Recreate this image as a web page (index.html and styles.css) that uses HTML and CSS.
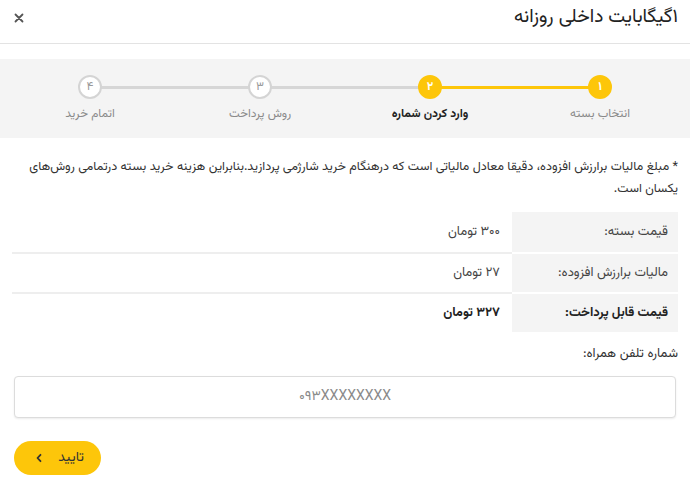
FILE: index.html
```html
<!DOCTYPE html>
<html lang="fa" dir="rtl">
<head>
<meta charset="utf-8">
<title>خرید بسته</title>
<link rel="stylesheet" href="styles.css">
</head>
<body>
<div class="modal">
  <header class="modal-head">
    <h1 class="modal-title">۱گیگابایت داخلی روزانه</h1>
    <button class="close" type="button" aria-label="بستن">
      <svg width="10" height="10" viewBox="0 0 10 10"><path d="M1.5 1.5 L8.5 8.5 M8.5 1.5 L1.5 8.5" stroke="#555" stroke-width="1.8" stroke-linecap="round"/></svg>
    </button>
  </header>

  <ol class="steps">
    <li class="step done"><span class="dot">۱</span><span class="step-label">انتخاب بسته</span></li>
    <li class="step active"><span class="dot">۲</span><span class="step-label">وارد کردن شماره</span></li>
    <li class="step"><span class="dot">۳</span><span class="step-label">روش پرداخت</span></li>
    <li class="step"><span class="dot">۴</span><span class="step-label">اتمام خرید</span></li>
  </ol>

  <p class="note">* مبلغ مالیات برارزش افزوده، دقیقا معادل مالیاتی است که درهنگام خرید شارژمی پردازید.بنابراین هزینه خرید بسته درتمامی روش‌های یکسان است.</p>

  <div class="price-table">
    <div class="row">
      <div class="cell label">قیمت بسته:</div>
      <div class="cell value">۳۰۰ تومان</div>
    </div>
    <div class="row">
      <div class="cell label">مالیات برارزش افزوده:</div>
      <div class="cell value">۲۷ تومان</div>
    </div>
    <div class="row total">
      <div class="cell label">قیمت قابل پرداخت:</div>
      <div class="cell value">۳۲۷ تومان</div>
    </div>
  </div>

  <label class="field-label" for="phone">شماره تلفن همراه:</label>
  <input class="field" id="phone" type="text" placeholder="۰۹۳XXXXXXXX">

  <div class="actions">
    <button class="submit" type="button">
      <span>تایید</span>
      <svg width="8" height="10" viewBox="0 0 8 10"><path d="M5.5 1.8 L2.5 5 L5.5 8.2" fill="none" stroke="#333" stroke-width="1.8" stroke-linecap="round" stroke-linejoin="round"/></svg>
    </button>
  </div>
</div>
</body>
</html>
```

FILE: styles.css
```css
* { box-sizing: border-box; }

html, body {
  margin: 0;
  padding: 0;
  background: #fff;
}

body {
  font-family: "Vazirmatn", "Noto Sans Arabic", "DejaVu Sans", sans-serif;
  color: #333;
  direction: rtl;
  width: 690px;
}

.modal {
  display: flex;
  flex-direction: column;
}

.modal-head {
  height: 44px;
  border-bottom: 1px solid #e3e3e3;
  display: flex;
  align-items: center;
  justify-content: space-between;
  padding: 0 12px 8px 12px;
}

.modal-title {
  margin: 0;
  font-size: 19px;
  font-weight: 400;
  color: #222;
}

.close {
  border: 0;
  background: none;
  padding: 0;
  width: 14px;
  height: 14px;
  display: flex;
  align-items: center;
  justify-content: center;
  cursor: pointer;
}

.steps {
  list-style: none;
  margin: 15px 0 0 0;
  padding: 16px 5px 0 5px;
  height: 79px;
  background: #f4f4f4;
  display: grid;
  grid-template-columns: repeat(4, 1fr);
}

.step {
  position: relative;
  display: flex;
  flex-direction: column;
  align-items: center;
}

.step + .step::before {
  content: "";
  position: absolute;
  top: 11px;
  left: 50%;
  width: 100%;
  height: 3px;
  background: #d6d6d6;
}

.step.active::before {
  background: #fdc60a;
}

.dot {
  position: relative;
  z-index: 1;
  width: 24px;
  height: 24px;
  border-radius: 50%;
  background: #fff;
  border: 2px solid #d4d4d4;
  color: #999;
  font-size: 12px;
  display: flex;
  align-items: center;
  justify-content: center;
  line-height: 1;
}

.step.done .dot,
.step.active .dot {
  background: #fdc60a;
  border-color: #fdc60a;
  color: #fff;
  font-weight: 700;
}

.step-label {
  margin-top: 7px;
  font-size: 12px;
  color: #8a8a8a;
  line-height: 16px;
}

.step.active .step-label {
  color: #222;
  font-weight: 700;
}

.note {
  margin: 18px 12px 0 12px;
  font-size: 12.6px;
  line-height: 22px;
  color: #333;
}

.price-table {
  margin: 12px 12px 0 12px;
  display: flex;
  flex-direction: column;
}

.row {
  display: grid;
  grid-template-columns: 166px 1fr;
}

.row + .row .cell.value {
  border-top: 2px solid #eeeeee;
}

.row + .row .cell.label {
  border-top: 2px solid #fff;
}

.cell {
  height: 40px;
  display: flex;
  align-items: center;
  font-size: 13px;
}

.cell.label {
  background: #f4f4f4;
  padding-right: 10px;
  color: #444;
}

.cell.value {
  padding-right: 12px;
  color: #444;
}

.row.total .cell {
  font-weight: 700;
  color: #222;
}

.field-label {
  margin: 12px 12px 0 12px;
  font-size: 13px;
  color: #333;
  line-height: 20px;
}

.field {
  margin: 12px 14px 0 14px;
  height: 42px;
  border: 1px solid #dcdcdc;
  border-radius: 4px;
  box-shadow: 0 1px 2px rgba(0,0,0,0.08);
  font-family: inherit;
  font-size: 14px;
  text-align: center;
  color: #333;
  direction: ltr;
  outline: none;
}

.field::placeholder {
  color: #8a8a8a;
}

.actions {
  display: flex;
  justify-content: flex-end;
  padding: 23px 14px 0 14px;
}

.submit {
  width: 87px;
  height: 34px;
  border: 0;
  border-radius: 17px;
  background: #fdc60a;
  display: flex;
  align-items: center;
  justify-content: space-between;
  padding: 0 17px 0 21px;
  font-family: inherit;
  font-size: 14px;
  color: #333;
  cursor: pointer;
}
```
